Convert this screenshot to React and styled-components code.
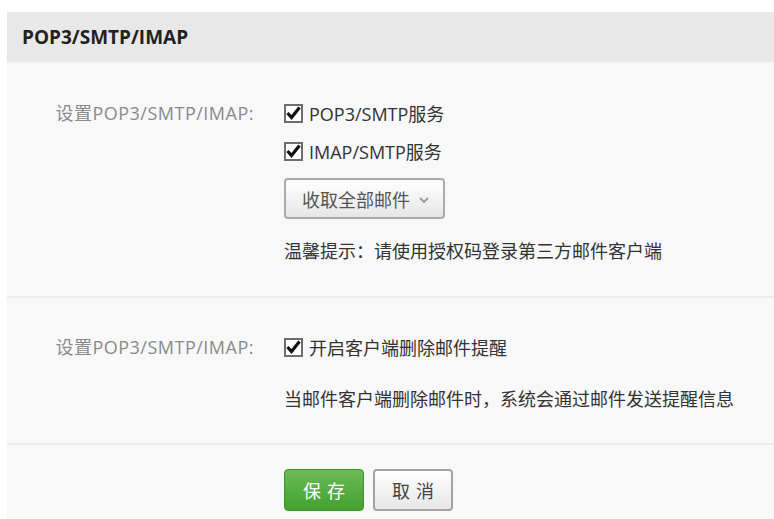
import React from "react";
import styled, { createGlobalStyle } from "styled-components";

const GlobalStyle = createGlobalStyle`
  body {
    margin: 0;
    background: #fff;
    font-family: "Open Sans", "Noto Sans CJK SC", sans-serif;
    overflow: hidden;
  }
`;

const Page = styled.div`
  padding: 12px 0 0 7px;
  height: 519px;
  box-sizing: border-box;
`;

const Panel = styled.div`
  background: #f8f8f8;
  height: 100%;
`;

const Header = styled.div`
  height: 50px;
  background: #e8e8e8;
  display: flex;
  align-items: center;
  padding-left: 15px;
  font-size: 19px;
  font-weight: bold;
  color: #222;
`;

const Section = styled.div`
  display: grid;
  grid-template-columns: 247px 1fr;
  column-gap: 30px;
  padding: ${(p) => p.pad};
  border-bottom: ${(p) => (p.last ? "none" : "2px solid #ececec")};
`;

const Label = styled.div`
  text-align: right;
  color: #8a8a8a;
  font-size: 18px;
  letter-spacing: 0.5px;
  line-height: 38px;
  height: 38px;
`;

const Content = styled.div`
  display: flex;
  flex-direction: ${(p) => (p.row ? "row" : "column")};
  align-items: flex-start;
`;

const Line = styled.div`
  display: flex;
  align-items: center;
  height: 38px;
  font-size: 18px;
  color: #333;
  margin-top: ${(p) => p.mt || 0}px;
`;

const Box = styled.span`
  width: 15px;
  height: 15px;
  border: 2px solid #6e6e6e;
  background: #fff;
  margin-right: 6px;
  display: flex;
  align-items: center;
  justify-content: center;
`;

const Select = styled.div`
  margin-top: 8px;
  width: 161px;
  height: 41px;
  box-sizing: border-box;
  border: 2px solid #ababab;
  border-radius: 4px;
  background: linear-gradient(#ffffff, #e6e6e6);
  display: flex;
  align-items: center;
  padding-left: 16px;
  font-size: 18px;
  color: #555;
  gap: 9px;
`;

const Button = styled.button`
  width: 80px;
  height: 42px;
  box-sizing: border-box;
  border-radius: 4px;
  font-family: inherit;
  font-size: 18px;
  letter-spacing: 6px;
  padding: 0 0 0 6px;
  margin-right: 9px;
  cursor: pointer;
  border: ${(p) => (p.primary ? "1px solid #3a9628" : "2px solid #a3a3a3")};
  background: ${(p) =>
    p.primary
      ? "linear-gradient(#6bbb55, #43a02f)"
      : "linear-gradient(#ffffff, #e6e6e6)"};
  color: ${(p) => (p.primary ? "#fff" : "#444")};
`;

const Checkbox = ({ children }) => (
  <Line>
    <Box>
      <svg width="15" height="14" viewBox="0 0 15 14">
        <path d="M1.5 7 L5.5 11.5 L13.5 1.5" fill="none" stroke="#111" strokeWidth="3.2" />
      </svg>
    </Box>
    {children}
  </Line>
);

const Chevron = () => (
  <svg width="10" height="10" viewBox="0 0 10 10">
    <path d="M1 4 L5 8 L9 4" fill="none" stroke="#999" strokeWidth="1.8" />
  </svg>
);

export default function App() {
  return (
    <Page>
      <GlobalStyle />
      <Panel>
        <Header>POP3/SMTP/IMAP</Header>
        <Section pad="32px 0 27px">
          <Label>设置POP3/SMTP/IMAP:</Label>
          <Content>
            <Checkbox>POP3/SMTP服务</Checkbox>
            <Checkbox>IMAP/SMTP服务</Checkbox>
            <Select>
              收取全部邮件
              <Chevron />
            </Select>
            <Line mt={12}>温馨提示：请使用授权码登录第三方邮件客户端</Line>
          </Content>
        </Section>
        <Section pad="30px 0 26px">
          <Label>设置POP3/SMTP/IMAP:</Label>
          <Content>
            <Checkbox>开启客户端删除邮件提醒</Checkbox>
            <Line mt={13}>当邮件客户端删除邮件时，系统会通过邮件发送提醒信息</Line>
          </Content>
        </Section>
        <Section pad="24px 0 0" last>
          <div />
          <Content row>
            <Button primary>保存</Button>
            <Button>取消</Button>
          </Content>
        </Section>
      </Panel>
    </Page>
  );
}
